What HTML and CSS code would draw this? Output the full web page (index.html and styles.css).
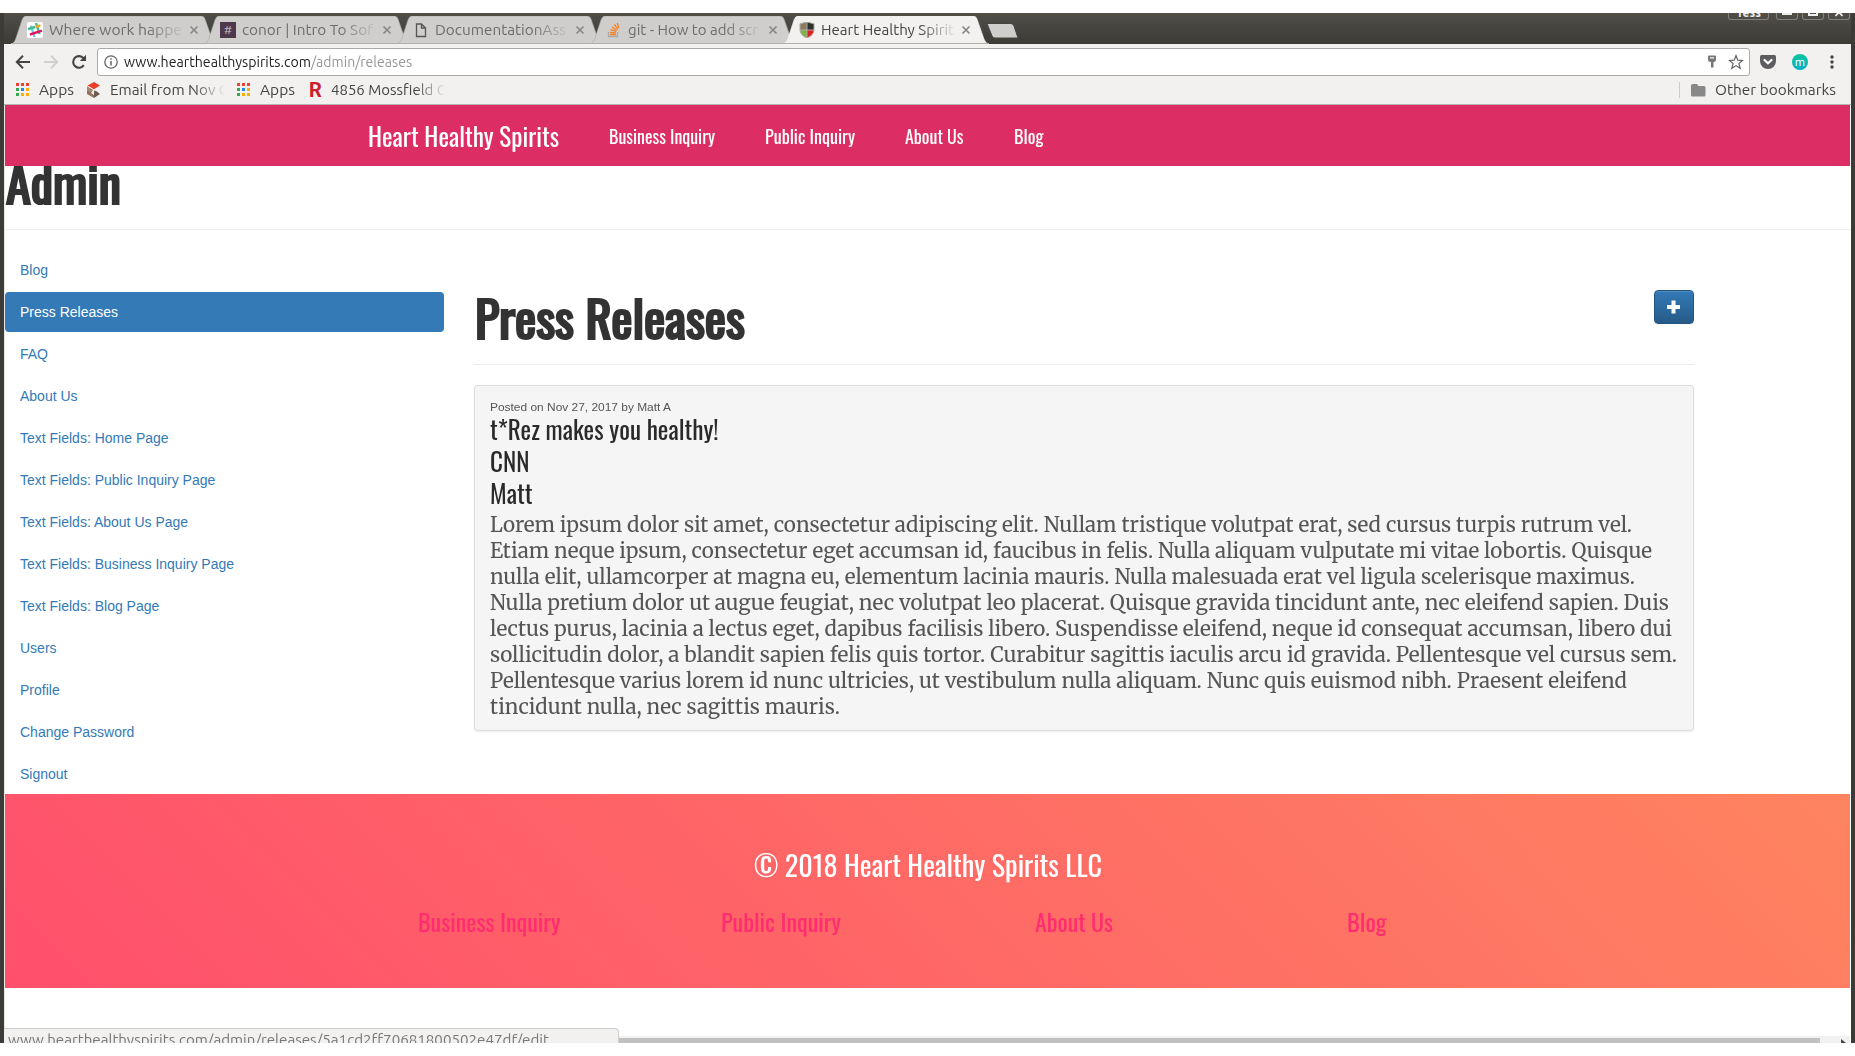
FILE: index.html
```
<!DOCTYPE html>
<html lang="en">
<head>
<meta charset="utf-8">
<title>Heart Healthy Spirits</title>
<link rel="stylesheet" href="styles.css">
</head>
<body>
<svg width="0" height="0" class="defs">
  <defs>
    <symbol id="tab" viewBox="0 0 206 28"><path d="M0 28 C3 27 4 25 5 22 L11 4 Q12.500 0 15 0 H190 Q193 0 194 3 L201 23 Q203 28 206 28 Z"/><path d="M0 27.500H206" class="tab-line"/></symbol>
    <symbol id="close" viewBox="0 0 10 10"><path d="M1.500 1.500L8.500 8.500M8.500 1.500L1.500 8.500" fill="none" stroke="currentColor" stroke-width="1.700"/></symbol>
    <symbol id="grid" viewBox="0 0 14 14"><path fill="#ea4335" d="M0 0h3v3H0zM5 0h3v3H5zM10 0h3v3h-3z"/><path fill="#34a853" d="M0 5h3v3H0zM0 10h3v3H0z"/><path fill="#1e88f5" d="M5 5h3v3H5z"/><path fill="#fbae05" d="M10 5h3v3h-3zM5 10h3v3H5zM10 10h3v3h-3z"/></symbol>
  </defs>
</svg>
<div class="window">
  <div class="titlebar">
    <div class="tabs">
      <div class="tab"><svg class="shape"><use href="#tab"/></svg>
        <svg class="fav" viewBox="0 0 16 16"><rect width="16" height="16" rx="2" fill="#fff"/><g fill="none" stroke-width="2.400"><path stroke="#3eb991" d="M9 1L12.500 12"/><path stroke="#70cadb" d="M4 3.500L7.500 15"/><path stroke="#e9a820" d="M8.500 4.800L13.500 3.300"/><path stroke="#3eb991" d="M1 7.200L8 5"/><path stroke="#e01765" d="M3 12.500L15 8.700"/></g></svg>
        <span class="label"><span class="fit" data-width="133">Where work happe</span></span><svg class="x"><use href="#close"/></svg></div>
      <div class="tab"><svg class="shape"><use href="#tab"/></svg>
        <span class="fav hash">#</span>
        <span class="label"><span class="fit" data-width="131">conor | Intro To Sof</span></span><svg class="x"><use href="#close"/></svg></div>
      <div class="tab"><svg class="shape"><use href="#tab"/></svg>
        <svg class="fav" viewBox="0 0 16 16"><path d="M3.500 2h5l4 4v8.500h-9zM8.500 2v4h4" fill="none" stroke="#555" stroke-width="1.300"/></svg>
        <span class="label"><span class="fit" data-width="131">DocumentationAss</span></span><svg class="x"><use href="#close"/></svg></div>
      <div class="tab"><svg class="shape"><use href="#tab"/></svg>
        <svg class="fav" viewBox="0 0 16 16"><path d="M2.500 10v4.500h9V10" fill="none" stroke="#aaa" stroke-width="1.300"/><path d="M4 12.500h6M4 10.300l6 .6M4.500 7.700l5.800 1.600M6 5l5 3.300M8.300 2.500l3.700 4.700M11.300 1l1.500 5" fill="none" stroke="#f48024" stroke-width="1.300"/></svg>
        <span class="label"><span class="fit" data-width="130">git - How to add scr</span></span><svg class="x"><use href="#close"/></svg></div>
      <div class="tab active"><svg class="shape"><use href="#tab"/></svg>
        <svg class="fav" viewBox="0 0 16 16"><path d="M8 0L1 1.800V8h7z" fill="#8d7b5c"/><path d="M8 0l7 1.800V8H8z" fill="#2f2f2f"/><path d="M1 8h7v8Q1 13 1 8z" fill="#7cb342"/><path d="M15 8H8v8q7-3 7-8z" fill="#dd2020"/><path d="M8 0L1 1.800V8Q1 13 8 16q7-3 7-8V1.800zM8 0v16M1 8h14" fill="none" stroke="#aaa" stroke-width="1"/></svg>
        <span class="label"><span class="fit" data-width="133">Heart Healthy Spirit</span></span><svg class="x"><use href="#close"/></svg></div>
      <svg class="newtab" viewBox="0 0 33 16"><path d="M1 .5H25Q27 .5 28 3L32 15H9Q7 15 6 13L1 .5Z" fill="#cfcecc" stroke="#45443f"/></svg>
    </div>
    <div class="controls">
      <span class="ctl user"><span>Tess</span></span>
      <span class="ctl"><i class="min"></i></span>
      <span class="ctl"><i class="max"></i></span>
      <span class="ctl"><svg width="10" height="10"><path d="M1.500 -5L8.500 3M8.500 -5L1.500 3" stroke="#eee" stroke-width="1.800"/></svg></span>
    </div>
  </div>

  <div class="toolbar">
    <svg class="back" viewBox="0 0 16 16"><path d="M15 8H2M8 1.800L1.800 8L8 14.200" fill="none" stroke="#444" stroke-width="2"/></svg>
    <svg class="fwd" viewBox="0 0 16 16"><path d="M1 8h13M8 1.800L14.200 8L8 14.200" fill="none" stroke="#d0d0ce" stroke-width="2"/></svg>
    <svg class="reload" viewBox="0 0 16 16"><path d="M12.800 11.200A5.800 5.800 0 1 1 12.500 4.300" fill="none" stroke="#444" stroke-width="2.100"/><path d="M15 .800V7H8.800z" fill="#444"/></svg>
    <div class="omnibox">
      <svg class="info" viewBox="0 0 14 14"><circle cx="7" cy="7" r="6.200" fill="none" stroke="#666" stroke-width="1.300"/><path d="M7 6v4.500M7 3.200v1.600" stroke="#666" stroke-width="1.500"/></svg>
      <span class="fit host" data-width="187">www.hearthealthyspirits.com</span><span class="fit path" data-width="101">/admin/releases</span>
      <svg class="key" viewBox="0 0 10 14"><path d="M1 1.500Q1 .500 2 .500H8Q9 .500 9 1.500V4.500Q9 7 6.500 7V12.500H4V7Q1 7 1 4.500z" fill="#777"/><path d="M3 2.300h4v1.200H3z" fill="#fff"/></svg>
      <svg class="star" viewBox="0 0 16 16"><path d="M8 1.500l1.800 4.600 4.900.3-3.800 3.100 1.300 4.800L8 11.600l-4.200 2.700 1.300-4.800L1.300 6.400l4.900-.3z" fill="none" stroke="#666" stroke-width="1.200"/></svg>
    </div>
    <svg class="pocket" viewBox="0 0 16 14"><path d="M1.500 0h13Q16 0 16 1.500V6A8 8 0 0 1 0 6V1.500Q0 0 1.500 0z" fill="#5d5d60"/><path d="M4.500 5L8 8.300 11.500 5" fill="none" stroke="#fff" stroke-width="2.200" stroke-linecap="round"/></svg>
    <span class="mbadge">m</span>
    <svg class="dots" viewBox="0 0 4 14"><g fill="#444"><circle cx="2" cy="2" r="1.700"/><circle cx="2" cy="7" r="1.700"/><circle cx="2" cy="12" r="1.700"/></g></svg>
  </div>

  <div class="bookmarks">
    <svg class="bi b-grid"><use href="#grid"/></svg>
    <span class="fit b-apps" data-width="35">Apps</span>
    <svg class="bi b-cube" viewBox="0 0 16 16"><path d="M8 0l6 3.500L8 7.200 1.500 3.500z" fill="#e8402a"/><path d="M1 4.500l6 3.500-2 3 3 2v3l-7-4z" fill="#93705f"/><path d="M8 8.500l3 1 3 2.500-6 4z" fill="#6d5b50"/><path d="M1 4.500l6 3.500-2 2-4-1z" fill="#a98672"/></svg>
    <span class="fade b-email"><span class="fit" data-width="119">Email from Nov G</span></span>
    <svg class="bi b-grid2"><use href="#grid"/></svg>
    <span class="fit b-apps" data-width="35">Apps</span>
    <span class="b-r">R</span>
    <span class="fade b-moss"><span class="fit" data-width="115">4856 Mossfield C</span></span>
    <span class="b-other"><svg width="15" height="13" viewBox="0 0 15 13"><path d="M1.500 0H6L7.500 2H13q1.500 0 1.500 1.500V11q0 1.500-1.500 1.500H1.500Q0 12.500 0 11V1.500Q0 0 1.500 0z" fill="#888"/></svg><span class="fit" data-width="121">Other bookmarks</span></span>
  </div>

  <div class="page">
    <nav class="navbar">
      <a class="brand"><span class="fit" data-width="191">Heart Healthy Spirits</span></a>
      <a><span class="fit" data-width="106">Business Inquiry</span></a>
      <a><span class="fit" data-width="90">Public Inquiry</span></a>
      <a><span class="fit" data-width="58.500">About Us</span></a>
      <a><span class="fit" data-width="29.500">Blog</span></a>
    </nav>
    <div class="admin"><h1><span class="fit" data-width="115">Admin</span></h1></div>
    <div class="content">
      <ul class="side">
        <li>Blog</li><li class="on">Press Releases</li><li>FAQ</li><li>About Us</li>
        <li>Text Fields: Home Page</li><li>Text Fields: Public Inquiry Page</li><li>Text Fields: About Us Page</li>
        <li>Text Fields: Business Inquiry Page</li><li>Text Fields: Blog Page</li><li>Users</li><li>Profile</li>
        <li>Change Password</li><li>Signout</li>
      </ul>
      <main>
        <div class="head">
          <h1><span class="fit" data-width="270">Press Releases</span></h1>
          <button class="add"><svg width="14" height="14"><path d="M6.500 .5v13M0 7h13" stroke="#fff" stroke-width="4"/></svg></button>
        </div>
        <article class="well">
          <p class="meta"><span class="fit" data-width="181">Posted on Nov 27, 2017 by Matt A</span></p>
          <h3><span class="fit" data-width="228.500">t*Rez makes you healthy!</span></h3>
          <h3><span class="fit" data-width="39.500">CNN</span></h3>
          <h3><span class="fit" data-width="42.500">Matt</span></h3>
          <p class="body">
            <span class="fit" data-width="1142">Lorem ipsum dolor sit amet, consectetur adipiscing elit. Nullam tristique volutpat erat, sed cursus turpis rutrum vel.</span><br>
            <span class="fit" data-width="1162">Etiam neque ipsum, consectetur eget accumsan id, faucibus in felis. Nulla aliquam vulputate mi vitae lobortis. Quisque</span><br>
            <span class="fit" data-width="1145">nulla elit, ullamcorper at magna eu, elementum lacinia mauris. Nulla malesuada erat vel ligula scelerisque maximus.</span><br>
            <span class="fit" data-width="1179">Nulla pretium dolor ut augue feugiat, nec volutpat leo placerat. Quisque gravida tincidunt ante, nec eleifend sapien. Duis</span><br>
            <span class="fit" data-width="1182">lectus purus, lacinia a lectus eget, dapibus facilisis libero. Suspendisse eleifend, neque id consequat accumsan, libero dui</span><br>
            <span class="fit" data-width="1187">sollicitudin dolor, a blandit sapien felis quis tortor. Curabitur sagittis iaculis arcu id gravida. Pellentesque vel cursus sem.</span><br>
            <span class="fit" data-width="1137">Pellentesque varius lorem id nunc ultricies, ut vestibulum nulla aliquam. Nunc quis euismod nibh. Praesent eleifend</span><br>
            <span class="fit" data-width="350">tincidunt nulla, nec sagittis mauris.</span>
          </p>
        </article>
      </main>
    </div>
    <footer>
      <p class="copy"><span class="fit" data-width="348">© 2018 Heart Healthy Spirits LLC</span></p>
      <div class="links">
        <a><span class="fit" data-width="142.500">Business Inquiry</span></a>
        <a><span class="fit" data-width="120">Public Inquiry</span></a>
        <a><span class="fit" data-width="78">About Us</span></a>
        <a><span class="fit" data-width="39.500">Blog</span></a>
      </div>
    </footer>
  </div>
  <div class="scrollbar"><div class="thumb"></div><svg width="5" height="4"><path d="M0 0l5 4H0z" fill="#444"/></svg></div>
  <div class="status"><span class="fit" data-width="541">www.hearthealthyspirits.com/admin/releases/5a1cd2ff70681800502e47df/edit</span></div>
</div>
<script src="fit.js"></script>
</body>
</html>
```
FILE: styles.css
```
* { box-sizing: border-box; }
body { margin: 0; background: #fff; height: 1056px; padding-top: 13px; overflow: hidden; font: 14px/20px "Liberation Sans", Arial, sans-serif; color: #333; }
h1, h3, p, ul { margin: 0; padding: 0; }
svg { display: block; flex: none; }
.defs { position: absolute; }
.fit { display: inline-block; white-space: nowrap; transform-origin: 0 50%; flex: none; }

/* window frame */
.window { position: relative; height: 1030px; overflow: hidden; border-left: 4px solid #3c3b37; border-right: 4px solid #3c3b37; background: #fff; box-shadow: inset 1px 0 #e8e7e5; }
.titlebar { height: 31px; margin: 0 -3px; padding: 3px 3px 0; background: linear-gradient(#504e47, #3c3b37); display: flex; justify-content: space-between; }
.tabs { display: flex; padding-left: 7px; font: 14.5px/28px "Ubuntu", "Noto Sans", "Open Sans", sans-serif; color: #6c6c6c; }
.tab { position: relative; width: 193px; height: 28px; display: flex; align-items: center; padding: 0 0 0 16px; }
.shape { position: absolute; left: 0; top: 0; width: 206px; height: 28px; fill: #cfcecc; stroke: #aaa9a6; stroke-width: .6; }
.tab-line { stroke: #b0afac; stroke-width: 1; }
.active { z-index: 2; color: #444; }
.active .shape { fill: #f2f1ef; stroke: #f2f1ef; }
.active .tab-line { stroke: #f2f1ef; }
.fav { position: relative; width: 16px; height: 16px; flex: none; }
.hash { background: #4d394b; color: #c9b9c7; font-size: 12px; line-height: 16px; text-align: center; }
.label { position: relative; width: 135px; margin-left: 6px; overflow: hidden; height: 28px; line-height: 27px; -webkit-mask-image: linear-gradient(90deg, #000 98px, transparent 136px); mask-image: linear-gradient(90deg, #000 98px, transparent 136px); }
.x { position: relative; width: 10px; height: 10px; margin-left: 5px; color: #888; }
.newtab { width: 33px; height: 16px; margin: 7px 0 0 10px; }
.controls { display: flex; gap: 4px; margin: -3px 1px 0 0; }
.ctl { width: 22px; height: 7px; border: 1px solid #83817a; border-top: 0; border-radius: 0 0 3px 3px; display: flex; justify-content: center; overflow: hidden; }
.user { width: 41px; margin-right: 3px; color: #eee; font: bold 12px/14px "Ubuntu", "Noto Sans", sans-serif; }
.user span { margin-top: -7px; }
.min { width: 10px; height: 2px; background: #eee; }
.max { width: 10px; height: 3px; border: 2px solid #eee; border-top: 0; }

/* toolbar */
.toolbar { height: 35px; background: #f2f1ef; display: flex; align-items: center; padding: 1px 16px 0 11px; }
.back, .fwd, .reload { width: 16px; height: 16px; }
.fwd, .reload { margin-left: 12px; }
.reload { margin-right: 10px; }
.omnibox { width: 1653px; height: 28px; border: 1px solid #aaa; border-radius: 3px; background: #fff; display: flex; align-items: center; padding: 0 5px 0 6px; font: 14.5px/24px "Ubuntu", "Noto Sans", "Open Sans", sans-serif; }
.info { width: 14px; height: 14px; margin-right: 6px; }
.host { color: #222; }
.path { color: #969696; }
.key { width: 10px; height: 14px; margin-left: auto; }
.star { width: 16px; height: 16px; margin-left: 11px; }
.pocket { width: 16px; height: 14px; margin-left: 10px; }
.mbadge { width: 16px; height: 16px; border-radius: 50%; margin-left: 16px; background: linear-gradient(#0bc59c, #06b0c8); color: #fff; font: 11px/15px "Noto Sans", sans-serif; text-align: center; }
.dots { width: 4px; height: 14px; margin-left: 22px; }
.bookmarks { height: 26px; background: #f2f1ef; border-bottom: 1px solid #b3b2b0; display: flex; align-items: center; padding: 0 15px 3px 12px; font: 14.5px/22px "Ubuntu", "Noto Sans", "Open Sans", sans-serif; color: #444; }
.bi { width: 14px; height: 14px; }
.b-grid { margin-right: 9px; }
.b-cube { width: 16px; height: 16px; margin: 0 8px 0 12px; }
.fade { width: 114px; overflow: hidden; -webkit-mask-image: linear-gradient(90deg, #000 84px, transparent 115px); mask-image: linear-gradient(90deg, #000 84px, transparent 115px); }
.b-grid2 { margin: 0 9px 0 13px; }
.b-r { width: 13px; margin: 0 9px 0 14px; color: #c8202d; font: bold 20px/22px "Roboto", sans-serif; }
.b-other { margin-left: auto; display: flex; align-items: center; border-left: 1px solid #ccc; height: 16px; padding-left: 11px; gap: 9px; }

/* site */
.page { margin: 0 0 0 1px; }
.navbar, h1, h3, footer { font-family: "Oswald", "Roboto", sans-serif; font-weight: 400; }
.navbar { position: relative; margin-right: 1px; z-index: 1; height: 61px; background: #dc2d64; color: #fff; display: flex; align-items: center; padding-left: 363px; gap: 50px; font-size: 18.300px; line-height: 61px; }
.brand { font-size: 24.800px; line-height: 60px; }
.admin { height: 64px; border-bottom: 1px solid #eee; overflow: hidden; }
h1 { font-size: 50px; -webkit-text-stroke: 2.200px #333; }
.admin h1 { line-height: 31px; padding-left: 1px; }
.content { display: flex; padding-top: 20px; height: 564px; }
.side { width: 439px; list-style: none; color: #337ab7; display: flex; flex-direction: column; gap: 2px; }
.side li { height: 40px; padding: 10px 15px; border-radius: 4px; }
.side .on { background: #337ab7; color: #fff; }
main { width: 1220px; margin: 40px 0 0 30px; }
.head { height: 75px; border-bottom: 1px solid #eee; display: flex; justify-content: space-between; align-items: flex-start; }
.head h1 { line-height: 52px; padding-left: .5px; }
.add { width: 40px; height: 34px; display: flex; align-items: center; justify-content: center; padding: 0; border: 1px solid #245580; border-radius: 4px; background: linear-gradient(#337ab7, #265a88); box-shadow: inset 0 1px rgba(255,255,255,.15); }
.well { margin-top: 20px; padding: 12px 15px 10px; border: 1px solid #dcdcdc; border-radius: 4px; background: #f5f5f5; box-shadow: 0 1px 2px rgba(0,0,0,.08); }
.meta { font-size: 11.300px; line-height: 18px; height: 17px; color: #555; }
h3 { font-size: 24.800px; line-height: 28px; height: 32px; color: #2a2a2a; }
.body { margin-top: 1px; height: 208px; white-space: nowrap; font: 20.300px/26px "Merriweather", "DejaVu Serif", serif; color: #555; }
.body .fit { vertical-align: top; }
footer { height: 194px; margin-right: 1px; padding-top: 51px; color: #fff; background: linear-gradient(45deg, #ff4f6c, #fe8460); text-align: center; }
.copy { font-size: 29px; line-height: 37px; height: 40px; }
.links { width: 1170px; margin: 18px auto 0; display: grid; grid-template-columns: repeat(4, 1fr); font-size: 23px; line-height: 38px; color: #ff2d70; }

/* lower edge */
.scrollbar { position: absolute; left: 0; right: 1px; bottom: 0; height: 7px; background: #f1f1f1; }
.thumb { width: 1816px; height: 5px; margin-top: 2px; background: #c1c1c1; }
.scrollbar svg { position: absolute; right: 4px; bottom: 0; }
.status { position: absolute; left: 0; bottom: 0; width: 615px; height: 15px; padding-left: 4px; overflow: hidden; background: #f2f1ef; border: solid #cfcecc; border-width: 1px 1px 0 0; border-radius: 0 4px 0 0; font: 14.5px/22px "Ubuntu", "Noto Sans", "Open Sans", sans-serif; color: #777; }
```
FILE: fit.js
```
// Condense each label to its set measure, keeping the layout box in step.
document.querySelectorAll('.fit').forEach(function (el) {
  var natural = el.getBoundingClientRect().width;
  var target = Number(el.dataset.width);
  el.style.transform = 'scaleX(' + target / natural + ')';
  el.style.marginRight = (target - natural) + 'px';
});
```
